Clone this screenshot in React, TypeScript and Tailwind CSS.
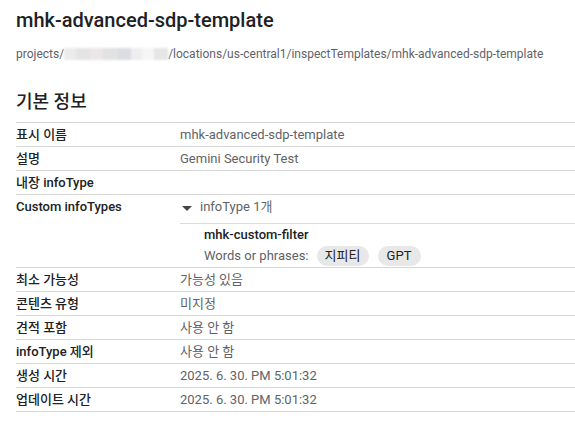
import React from "react";

const font = { fontFamily: "Roboto, 'Noto Sans CJK KR', sans-serif" };

function Row({ label, value }: { label: string; value?: string }) {
  return (
    <div className="flex h-[24px] items-center border-t border-[#d6d6d6]">
      <div className="w-[164px] shrink-0 text-[13px] font-medium text-[#202124]">{label}</div>
      <div className="text-[13px] text-[#5f6368]">{value}</div>
    </div>
  );
}

export default function App() {
  return (
    <div className="h-[423px] w-[575px] overflow-hidden bg-white pl-4" style={font}>
      <div className="pt-[6px] text-[20px] font-medium leading-[28px] text-[#202124]">
        mhk-advanced-sdp-template
      </div>
      <div className="mt-[12px] flex items-center text-[12px] leading-[16px] text-[#5f6368]">
        <span>projects/</span>
        <span className="flex h-[12px] w-[104px] blur-[1px]">
          <span className="w-[12px] bg-[#ececec]" />
          <span className="w-[14px] bg-[#e4e4e4]" />
          <span className="w-[13px] bg-[#ebe7e6]" />
          <span className="w-[15px] bg-[#e2e2e2]" />
          <span className="w-[13px] bg-[#dcdde2]" />
          <span className="w-[11px] bg-[#eeeeee]" />
          <span className="w-[12px] bg-[#f6f6f6]" />
          <span className="w-[14px] bg-[#e6e6e6]" />
        </span>
        <span>/locations/us-central1/inspectTemplates/mhk-advanced-sdp-template</span>
      </div>
      <div className="mt-[28px] text-[18px] font-medium leading-[24px] text-[#202124]">기본 정보</div>
      <div className="mt-[8px]">
        <Row label="표시 이름" value="mhk-advanced-sdp-template" />
        <Row label="설명" value="Gemini Security Test" />
        <Row label="내장 infoType" />
        <div className="flex border-t border-[#d6d6d6]">
          <div className="flex h-[24px] w-[164px] shrink-0 items-center text-[13px] font-medium text-[#202124]">
            Custom infoTypes
          </div>
          <div className="flex-1">
            <div className="flex h-[24px] items-center text-[13px] text-[#5f6368]">
              <svg width="10" height="5" viewBox="0 0 10 5" className="ml-[2px] mr-[8px] mt-[2px]">
                <path d="M0 0 L10 0 L5 5 Z" fill="#444746" />
              </svg>
              <span>infoType 1개</span>
            </div>
            <div className="mt-[4px] border-t border-[#dadce0] pb-[1px] pl-[24px]">
              <div className="flex h-[21px] items-center text-[13px] font-medium text-[#202124]">
                mhk-custom-filter
              </div>
              <div className="flex h-[21px] items-center text-[13px] text-[#5f6368]">
                <span>Words or phrases:</span>
                <span className="ml-[8px] flex h-[20px] w-[52px] items-center justify-center rounded-full bg-[#e8e8e8] text-[#202124]">
                  지피티
                </span>
                <span className="ml-[9px] flex h-[20px] w-[43px] items-center justify-center rounded-full bg-[#e8e8e8] text-[#202124]">
                  GPT
                </span>
              </div>
            </div>
          </div>
        </div>
        <Row label="최소 가능성" value="가능성 있음" />
        <Row label="콘텐츠 유형" value="미지정" />
        <Row label="견적 포함" value="사용 안 함" />
        <Row label="infoType 제외" value="사용 안 함" />
        <Row label="생성 시간" value="2025. 6. 30. PM 5:01:32" />
        <Row label="업데이트 시간" value="2025. 6. 30. PM 5:01:32" />
        <div className="border-t border-[#d6d6d6]" />
      </div>
    </div>
  );
}
